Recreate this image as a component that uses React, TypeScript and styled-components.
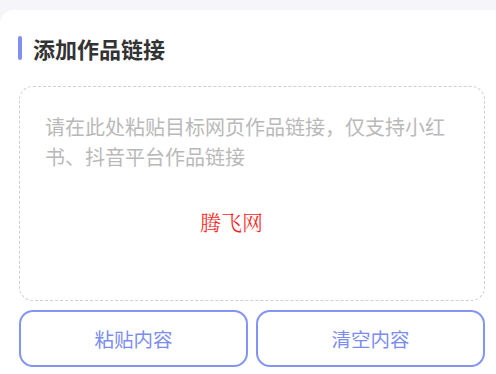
import React from "react";
import styled, { createGlobalStyle } from "styled-components";

const Global = createGlobalStyle`
  html, body { margin: 0; padding: 0; background: #f5f5fa; overflow: hidden; }
  body { font-family: "Noto Sans CJK SC", "Noto Sans", sans-serif; }
`;

const Page = styled.div`
  width: 496px;
  height: 374px;
  padding-top: 10px;
  box-sizing: border-box;
  overflow: hidden;
`;

const Card = styled.div`
  width: 520px;
  height: 400px;
  background: #ffffff;
  border-radius: 14px 14px 0 0;
  padding: 26px 0 0 19px;
  box-sizing: border-box;
  display: flex;
  flex-direction: column;
`;

const TitleRow = styled.div`
  display: flex;
  align-items: center;
  height: 24px;
  gap: 11px;
  margin-left: -1px;
`;

const Bar = styled.div`
  width: 4px;
  height: 24px;
  border-radius: 2px;
  background: #7f8ff2;
`;

const Title = styled.h2`
  margin: 0;
  font-size: 22px;
  font-weight: 700;
  color: #333333;
  line-height: 24px;
`;

const Box = styled.div`
  margin-top: 26px;
  width: 466px;
  height: 215px;
  box-sizing: border-box;
  border: 1px dashed #cfcfcf;
  border-radius: 14px;
  padding: 25px 18px 0 25px;
`;

const Placeholder = styled.div`
  font-size: 20px;
  line-height: 30px;
  color: #b9b9b9;
  width: 410px;
`;

const Watermark = styled.div`
  margin-top: 37px;
  margin-left: 155px;
  font-family: "Noto Serif CJK SC", "Liberation Serif", serif;
  font-weight: 300;
  font-size: 21px;
  line-height: 24px;
  color: #ff1a1a;
`;

const Buttons = styled.div`
  margin-top: 9px;
  width: 466px;
  display: grid;
  grid-template-columns: 1fr 1fr;
  gap: 8px;
`;

const Button = styled.button`
  height: 57px;
  box-sizing: border-box;
  border: 2px solid #8494f2;
  border-radius: 14px;
  background: #ffffff;
  color: #7b8cf0;
  font-family: "Noto Sans CJK SC", sans-serif;
  font-size: 19.5px;
  padding: 0;
`;

export default function App() {
  return (
    <Page>
      <Global />
      <Card>
        <TitleRow>
          <Bar />
          <Title>添加作品链接</Title>
        </TitleRow>
        <Box>
          <Placeholder>请在此处粘贴目标网页作品链接，仅支持小红书、抖音平台作品链接</Placeholder>
          <Watermark>腾飞网</Watermark>
        </Box>
        <Buttons>
          <Button>粘贴内容</Button>
          <Button>清空内容</Button>
        </Buttons>
      </Card>
    </Page>
  );
}
